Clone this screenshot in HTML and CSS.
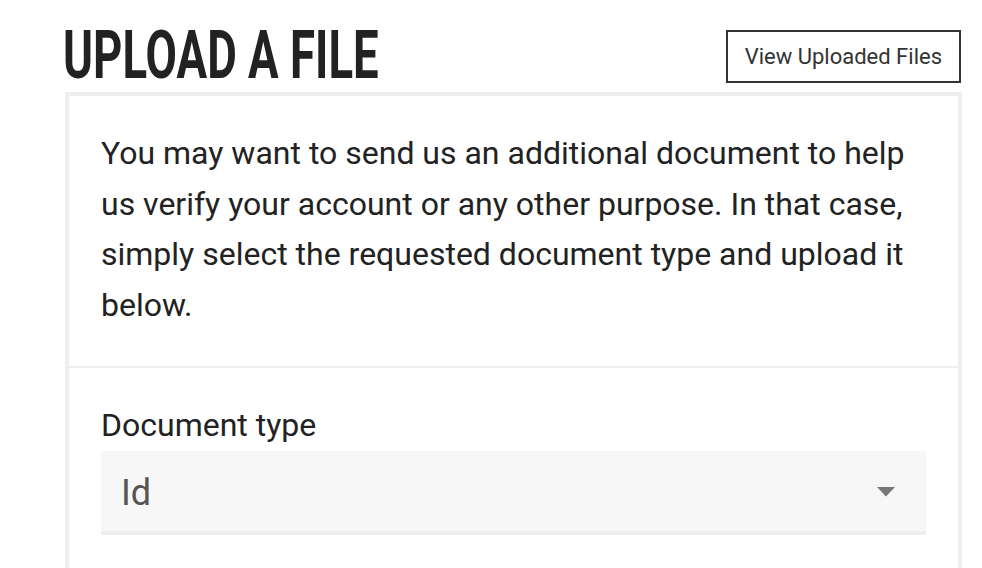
FILE: index.html
```html
<!DOCTYPE html>
<html lang="en">
<head>
<meta charset="utf-8">
<title>Upload a file</title>
<link rel="stylesheet" href="styles.css">
</head>
<body>
<main class="page">
  <header class="header">
    <h1 class="title"><span class="title-text">UPLOAD A FILE</span></h1>
    <button class="btn-outline" type="button">View Uploaded Files</button>
  </header>
  <section class="card">
    <div class="card-intro">
      <p class="intro-text">You may want to send us an additional document to help us verify your account or any other purpose. In that case, simply select the requested document type and upload it below.</p>
    </div>
    <div class="card-form">
      <label class="field-label" for="doctype">Document type</label>
      <div class="select" id="doctype">
        <span class="select-value">Id</span>
        <svg class="select-caret" width="18" height="10" viewBox="0 0 18 10" aria-hidden="true"><path d="M0 0 H18 L9 9.5 Z" fill="#777"/></svg>
      </div>
    </div>
  </section>
</main>
</body>
</html>
```

FILE: styles.css
```css
html, body {
  margin: 0;
  padding: 0;
  background: #ffffff;
}

body {
  font-family: Roboto, "Liberation Sans", Arial, sans-serif;
  color: #222222;
  overflow: hidden;
}

.page {
  width: 897px;
  margin-left: 65px;
}

.header {
  display: flex;
  justify-content: space-between;
  align-items: flex-start;
  padding-top: 21px;
}

.title {
  margin: 0;
  font-family: Roboto, "Liberation Sans", sans-serif;
  font-weight: 700;
  font-size: 67.5px;
  line-height: 68px;
  color: #222222;
  white-space: nowrap;
}

.title-text {
  display: inline-block;
  transform: scaleX(0.675);
  transform-origin: left center;
  margin-left: -2px;
}

.btn-outline {
  margin-top: 9px;
  margin-right: 1px;
  padding: 12px 17px;
  border: 2px solid #333333;
  background: #ffffff;
  font-family: Roboto, "Liberation Sans", sans-serif;
  font-size: 22px;
  line-height: 25px;
  color: #333333;
  border-radius: 0;
}

.card {
  margin-top: 3px;
  border: 4px solid #eeeeee;
  border-bottom: none;
}

.card-intro {
  padding: 32px 32px 36px;
  border-bottom: 2px solid #eeeeee;
}

.intro-text {
  margin: 0;
  font-size: 32px;
  line-height: 50.6px;
  color: #222222;
}

.card-form {
  padding: 39px 32px 40px;
}

.field-label {
  display: block;
  font-size: 32px;
  line-height: 36px;
  color: #222222;
  margin-bottom: 8px;
}

.select {
  display: flex;
  align-items: center;
  justify-content: space-between;
  height: 80px;
  padding: 0 31px 0 20px;
  background: #f7f7f7;
  border-bottom: 4px solid #eeeeee;
}

.select-value {
  margin-top: 4px;
  font-size: 36px;
  line-height: 43px;
  color: #555555;
}

.select-caret {
  display: block;
  margin-top: 2px;
}
```
